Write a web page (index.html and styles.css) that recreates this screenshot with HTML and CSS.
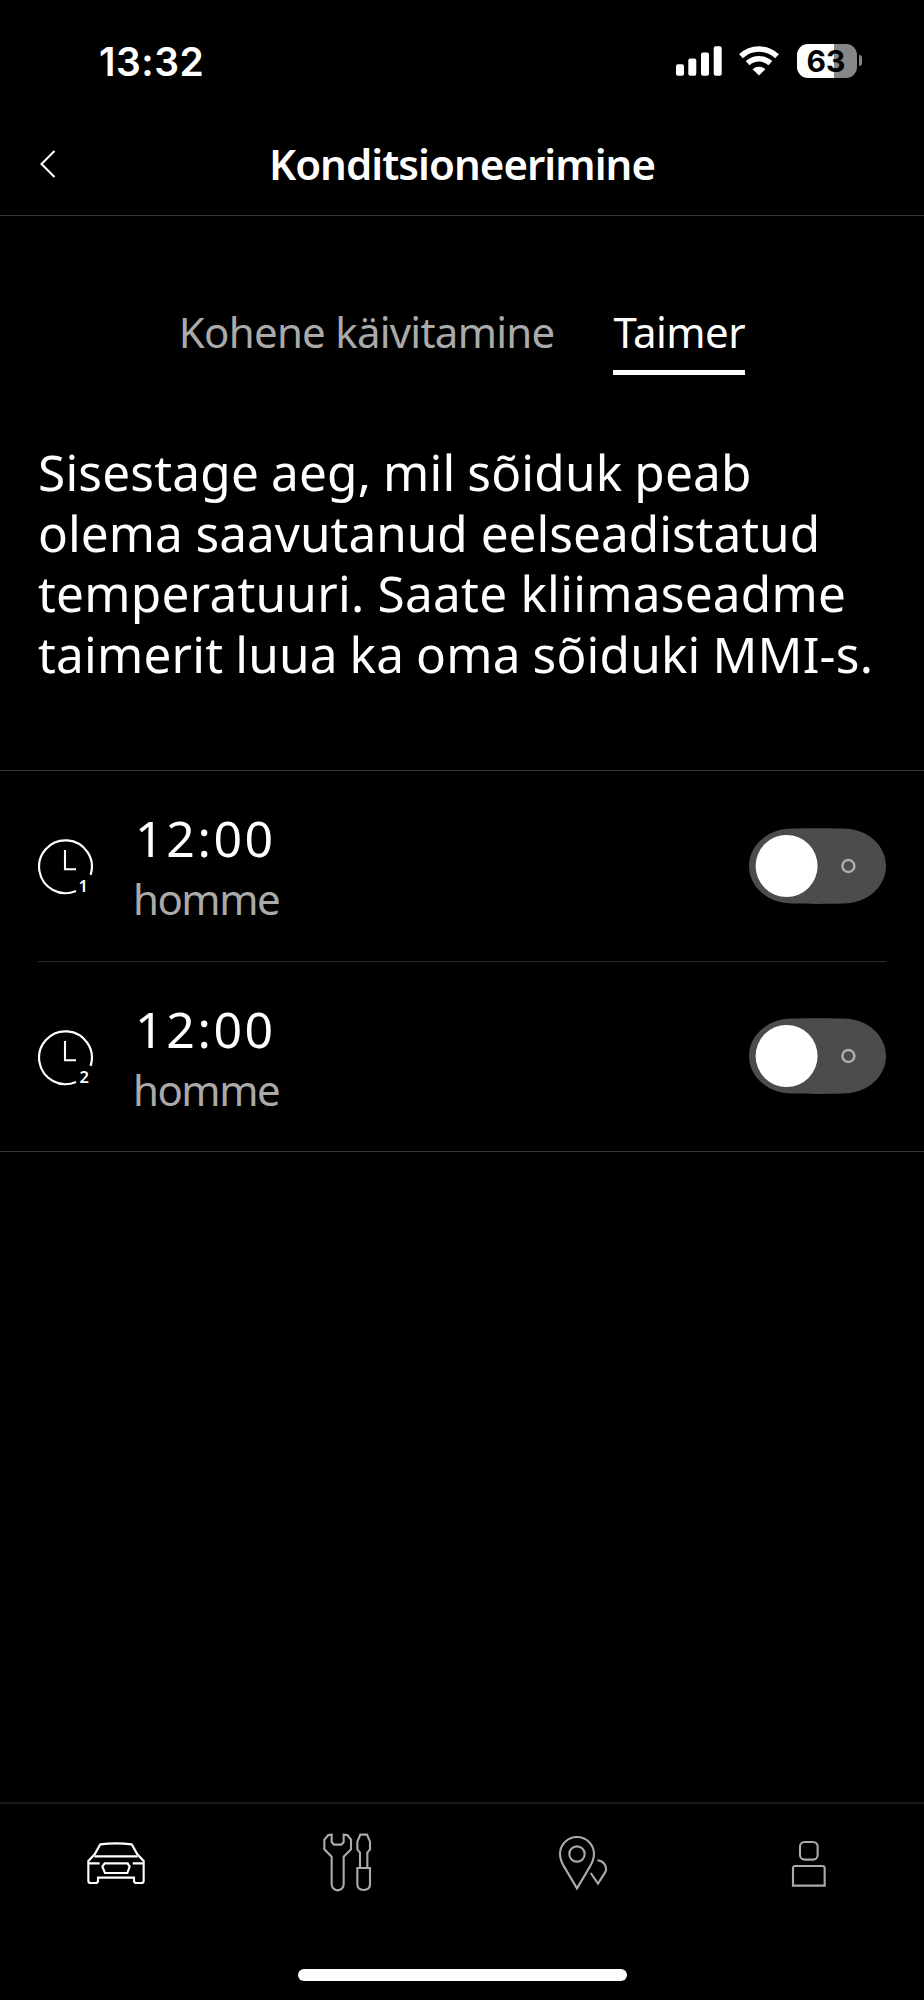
FILE: index.html
```html
<!DOCTYPE html>
<html lang="et">
<head>
    <meta charset="UTF-8">
    <meta name="viewport" content="width=device-width, initial-scale=1.0">
    <title>Konditsioneerimine</title>
    <link rel="stylesheet" href="styles.css">
</head>
<body>

    <!-- Status Bar -->
    <div class="status-bar">
        <span class="clock">13:32</span>
        <div class="status-icons">
            <svg class="signal" width="48" height="34" viewBox="0 0 48 34" fill="#fff">
                <rect x="1" y="20.3" width="8" height="11.5" rx="2"/>
                <rect x="13.3" y="14.5" width="8" height="17.3" rx="2"/>
                <rect x="26" y="8.5" width="8" height="23.3" rx="2"/>
                <rect x="38.7" y="2.3" width="8" height="29.5" rx="2"/>
            </svg>
            <svg class="wifi" width="42" height="34" viewBox="0 0 42 34">
                <path d="M3 12.3A26 26 0 0 1 39 12.3" fill="none" stroke="#fff" stroke-width="5.6"/>
                <path d="M9.6 19.2A17 17 0 0 1 32.4 19.2" fill="none" stroke="#fff" stroke-width="5.6"/>
                <path d="M14.6 25.2A9.5 9.5 0 0 1 27.4 25.2L21 31.6Z" fill="#fff"/>
            </svg>
            <div class="battery"><span>63</span></div>
            <div class="battery-tip"></div>
        </div>
    </div>

    <!-- Header -->
    <header class="header">
        <svg class="back" width="16" height="30" viewBox="0 0 16 30">
            <path d="M14.5 2L1.5 15L14.5 28" fill="none" stroke="#fff" stroke-width="2.1"/>
        </svg>
        <h1>Konditsioneerimine</h1>
    </header>

    <!-- Tabs -->
    <nav class="tabs">
        <a class="tab">Kohene käivitamine</a>
        <a class="tab active">Taimer</a>
    </nav>

    <p class="intro">
        <span class="loose">Sisestage aeg, mil sõiduk peab</span>
        <span>olema saavutanud eelseadistatud</span>
        <span class="wide">temperatuuri. Saate kliimaseadme</span>
        <span class="loose">taimerit luua ka oma sõiduki MMI-s.</span>
    </p>

    <!-- Timers -->
    <section class="timers">
        <div class="timer">
            <svg class="timer-icon" width="60" height="60" viewBox="0 0 60 60">
                <path d="M52.6 38.8A26.4 26.4 0 1 0 38 54.9" fill="none" stroke="#fff" stroke-width="2.2"/>
                <path d="M27 14V33.3H38" fill="none" stroke="#fff" stroke-width="2.1"/>
                <text x="40.5" y="55.7">1</text>
            </svg>
            <div class="timer-text">
                <div class="time">12:00</div>
                <div class="day">homme</div>
            </div>
            <svg class="toggle" width="138" height="76" viewBox="0 0 138 76">
                <path d="M46 .5C59 0 81 0 94 .5C119 0 138 17 138 38S119 76 94 75.5C81 76 59 76 46 75.5C20 76 1 59 1 38S20 0 46 .5Z" fill="#4c4c4c"/>
                <circle cx="38.6" cy="38" r="31" fill="#fff"/>
                <circle cx="100.4" cy="38" r="6" fill="none" stroke="#b0b0b0" stroke-width="2.4"/>
            </svg>
        </div>
        <div class="timer">
            <svg class="timer-icon" width="60" height="60" viewBox="0 0 60 60">
                <path d="M52.6 38.8A26.4 26.4 0 1 0 38 54.9" fill="none" stroke="#fff" stroke-width="2.2"/>
                <path d="M27 14V33.3H38" fill="none" stroke="#fff" stroke-width="2.1"/>
                <text x="41.5" y="55.7">2</text>
            </svg>
            <div class="timer-text">
                <div class="time">12:00</div>
                <div class="day">homme</div>
            </div>
            <svg class="toggle" width="138" height="76" viewBox="0 0 138 76">
                <path d="M46 .5C59 0 81 0 94 .5C119 0 138 17 138 38S119 76 94 75.5C81 76 59 76 46 75.5C20 76 1 59 1 38S20 0 46 .5Z" fill="#4c4c4c"/>
                <circle cx="38.6" cy="38" r="31" fill="#fff"/>
                <circle cx="100.4" cy="38" r="6" fill="none" stroke="#b0b0b0" stroke-width="2.4"/>
            </svg>
        </div>
    </section>

    <!-- Bottom Navigation -->
    <footer class="bottom">
        <nav class="bottom-nav">
            <svg class="nav-icon active" viewBox="78 126 180 180">
                <path d="M85 213L104 193L121 163Q168 157 215 163L232 193L251 213V272Q251 279 244 279H230Q222 279 222 272V263H114V272Q114 279 106 279H92Q85 279 85 272Z"/>
                <path d="M103 199H233M86 220H119M218 220H251"/>
                <path d="M134 220H203L209 230L202 249H135L127 230Z"/>
            </svg>
            <svg class="nav-icon" viewBox="770 126 180 180">
                <path d="M814 134L804 135L792 149V178L814 200V283A18 18 0 0 0 850 283V200L872 178V149L861 135L850 134V156L843 164H821L814 156Z"/>
                <path d="M900 134H920L929 155V178L921 188V234H929V283Q929 300 910 300Q891 300 891 283V234H899V188L891 178V155ZM891 234H929"/>
            </svg>
            <svg class="nav-icon" viewBox="54 126 180 180">
                <path d="M141 295L104 233Q90 210 90 192A51 51 0 0 1 192 192Q192 210 178 233Z"/>
                <circle cx="141" cy="192" r="23"/>
                <path d="M202 211C222 212 234 232 225 248L204 281L182 249"/>
            </svg>
            <svg class="nav-icon" viewBox="747 126 180 180">
                <rect x="810" y="156" width="53" height="53" rx="14"/>
                <path d="M789 287V235Q789 228 796 228H877Q884 228 884 235V287Z"/>
            </svg>
        </nav>
        <div class="home-indicator"></div>
    </footer>

</body>
</html>
```
FILE: styles.css
```css
* {
    box-sizing: border-box;
}

body {
    margin: 0;
    width: 924px;
    height: 2000px;
    display: flex;
    flex-direction: column;
    background: #000;
    color: #fff;
    font-family: "Noto Sans", sans-serif;
    overflow: hidden;
}

/* Status Bar */
.status-bar {
    display: flex;
    justify-content: space-between;
    height: 115px;
    padding: 38px 62px 0 99px;
    font-family: Inter, sans-serif;
}

.clock {
    font-size: 39px;
    line-height: 47px;
    font-weight: 600;
    letter-spacing: 0.5px;
}

.status-icons {
    display: flex;
    align-items: flex-start;
    padding-top: 6px;
}

.wifi {
    margin-left: 15px;
}

.battery {
    width: 60px;
    height: 34px;
    margin-left: 17px;
    padding-right: 2px;
    border-radius: 11px;
    background: linear-gradient(to right, #fff 62%, #868686 62%);
    color: #000;
    font-size: 30px;
    font-weight: 700;
    line-height: 34px;
    text-align: center;
}

.battery-tip {
    width: 3px;
    height: 11px;
    margin: 11px 0 0 2px;
    border-radius: 0 4px 4px 0;
    background: #868686;
}

/* Header */
.header {
    display: grid;
    grid-template-columns: 40px 1fr 40px;
    align-items: center;
    height: 101px;
    padding: 0 40px 3px;
    border-bottom: 1px solid #363636;
}

.header h1 {
    margin: 0;
    font-size: 42px;
    font-weight: 600;
    line-height: 56px;
    letter-spacing: -0.95px;
    text-align: center;
    white-space: nowrap;
}

/* Tabs */
.tabs {
    display: flex;
    justify-content: center;
    gap: 59px;
    height: 160px;
    padding-top: 85px;
}

.tab {
    height: 74px;
    color: #aaa;
    font-size: 42px;
    line-height: 61px;
    letter-spacing: -0.75px;
    white-space: nowrap;
}

.tab.active {
    color: #fff;
    letter-spacing: -0.5px;
    border-bottom: 5px solid #fff;
}

/* Intro */
.intro {
    height: 394px;
    margin: 0;
    padding: 66px 38px 0;
    font-size: 49.5px;
    line-height: 60.5px;
    white-space: nowrap;
}

.intro span {
    display: block;
}

.intro .wide {
    letter-spacing: 0.25px;
}

.intro .loose {
    letter-spacing: 0.2px;
    word-spacing: -1.2px;
}

/* Timers */
.timers {
    border-top: 1px solid #363636;
    border-bottom: 1px solid #363636;
}

.timer {
    display: flex;
    align-items: center;
    height: 190px;
    margin: 0 38px;
}

.timer + .timer {
    border-top: 1px solid #2a2a2a;
}

.timer-icon text {
    fill: #fff;
    font-size: 16.5px;
    font-weight: 600;
}

.timer-text {
    margin-left: 35px;
    padding-top: 6px;
}

.time {
    padding-left: 2px;
    font-size: 50px;
    line-height: 60px;
    letter-spacing: 2.6px;
}

.day {
    color: #aaa;
    font-size: 42px;
    line-height: 62px;
    letter-spacing: -1.5px;
}

.toggle {
    margin-left: auto;
    margin-bottom: 1px;
}

/* Bottom Navigation */
.bottom {
    height: 198px;
    margin-top: auto;
    border-top: 2px solid #181818;
}

.bottom-nav {
    display: grid;
    grid-template-columns: repeat(4, 1fr);
    justify-items: center;
    height: 165px;
    padding-top: 28px;
}

.nav-icon {
    width: 60px;
    height: 60px;
    fill: none;
    stroke: #aaa;
    stroke-width: 6.4;
}

.nav-icon.active {
    stroke: #fff;
}

.home-indicator {
    width: 329px;
    height: 12px;
    margin: 0 auto;
    border-radius: 6px;
    background: #fff;
}
```
